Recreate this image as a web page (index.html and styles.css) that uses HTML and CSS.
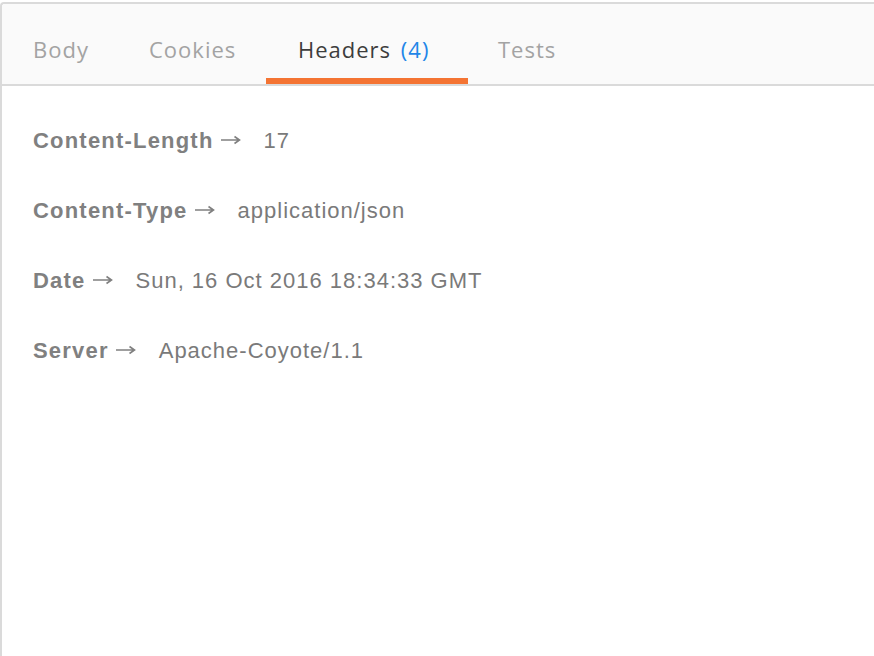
FILE: index.html
```html
<!DOCTYPE html>
<html>
<head>
<meta charset="utf-8">
<link rel="stylesheet" href="styles.css">
</head>
<body>
<div class="panel">
  <div class="tabs">
    <div class="tab tab-body">Body</div>
    <div class="tab tab-cookies">Cookies</div>
    <div class="tab tab-headers active">Headers <span class="count">(4)</span></div>
    <div class="tab tab-tests">Tests</div>
  </div>
  <div class="headers">
    <div class="row"><span class="key">Content-Length</span><span class="arrow"><svg width="20" height="10" viewBox="0 0 20 10"><path d="M0 5H18M13.5 1.5L18.5 5L13.5 8.5" fill="none" stroke="#808080" stroke-width="1.6"/></svg></span><span class="val">17</span></div>
    <div class="row"><span class="key">Content-Type</span><span class="arrow"><svg width="20" height="10" viewBox="0 0 20 10"><path d="M0 5H18M13.5 1.5L18.5 5L13.5 8.5" fill="none" stroke="#808080" stroke-width="1.6"/></svg></span><span class="val">application/json</span></div>
    <div class="row"><span class="key">Date</span><span class="arrow"><svg width="20" height="10" viewBox="0 0 20 10"><path d="M0 5H18M13.5 1.5L18.5 5L13.5 8.5" fill="none" stroke="#808080" stroke-width="1.6"/></svg></span><span class="val">Sun, 16 Oct 2016 18:34:33 GMT</span></div>
    <div class="row"><span class="key">Server</span><span class="arrow"><svg width="20" height="10" viewBox="0 0 20 10"><path d="M0 5H18M13.5 1.5L18.5 5L13.5 8.5" fill="none" stroke="#808080" stroke-width="1.6"/></svg></span><span class="val">Apache-Coyote/1.1</span></div>
  </div>
</div>
</body>
</html>
```

FILE: styles.css
```css
html, body {
  margin: 0;
  padding: 0;
  background: #fff;
  overflow: hidden;
  height: 100%;
}
.panel {
  margin-top: 2px;
  width: 900px;
  height: 654px;
  border-top: 2px solid #dadada;
  border-left: 2px solid #dadada;
  border-top-left-radius: 4px;
  box-sizing: border-box;
}
.tabs {
  display: flex;
  height: 80px;
  background: #fafafa;
  border-bottom: 2px solid #dadada;
  border-top-left-radius: 3px;
}
.tab {
  box-sizing: border-box;
  padding-left: 31px;
  font-family: "Open Sans", sans-serif;
  font-size: 22px;
  letter-spacing: 1px;
  color: #a3a3a3;
  line-height: 1;
  padding-top: 34px;
  border-bottom: 6px solid transparent;
}
.tab-body { width: 116px; }
.tab-cookies { width: 148px; }
.tab-headers { width: 202px; padding-left: 32px; }
.tab-tests { width: 120px; padding-left: 30px; }
.tab.active {
  color: #3d3d3d;
  border-bottom-color: #f47433;
}
.count {
  color: #1f86e8;
  margin-left: 3px;
}
.headers {
  padding: 42px 0 0 31px;
}
.row {
  display: flex;
  align-items: baseline;
  height: 70px;
  font-family: "Liberation Sans", Arial, sans-serif;
  font-size: 22px;
  letter-spacing: 1px;
  color: #7b7b7b;
  line-height: 26px;
}
.key {
  font-weight: bold;
  letter-spacing: 1.2px;
  color: #808080;
}
.arrow {
  margin-left: 7px;
  margin-right: 23px;
}
.arrow svg {
  display: inline-block;
  vertical-align: 3px;
}
.val { color: #7a7a7a; }
```
